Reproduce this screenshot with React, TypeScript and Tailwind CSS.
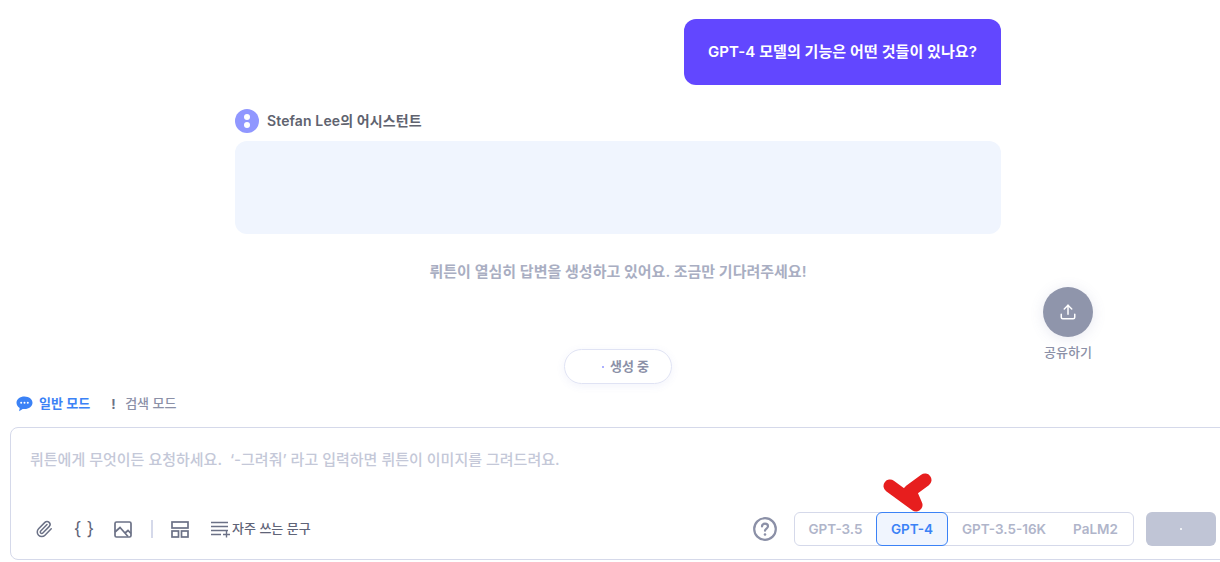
import { Paperclip, Upload } from "lucide-react";

const font = { fontFamily: '"Inter", "Noto Sans CJK KR", sans-serif' };

function ChatBubbleIcon() {
  return (
    <svg width="17" height="16" viewBox="0 0 17 16">
      <path d="M8.5 0.5C4 0.5 0.5 3.2 0.5 6.8c0 2.2 1.3 4 3.2 5.1l-0.6 3.4 3.6-2.4c0.6 0.1 1.2 0.2 1.8 0.2 4.5 0 8-2.8 8-6.3S13 0.5 8.5 0.5z" fill="#3b82f6" />
      <circle cx="5.2" cy="6.8" r="1" fill="#fff" />
      <circle cx="8.5" cy="6.8" r="1" fill="#fff" />
      <circle cx="11.8" cy="6.8" r="1" fill="#fff" />
    </svg>
  );
}

function ImageIcon() {
  return (
    <svg width="18" height="17" viewBox="0 0 18 17" fill="none" stroke="#6b7186" strokeWidth="1.7">
      <rect x="1" y="1" width="16" height="15" rx="1.5" />
      <path d="M1 11l5-4.5 8 9M11 12l3-2.5 3 3" />
    </svg>
  );
}

function LayoutIcon() {
  return (
    <svg width="18" height="17" viewBox="0 0 18 17" fill="none" stroke="#6b7186" strokeWidth="1.7">
      <rect x="1" y="1" width="16" height="6" />
      <rect x="1" y="10" width="6.5" height="6" />
      <rect x="10.5" y="10" width="6.5" height="6" />
    </svg>
  );
}

function PhraseIcon() {
  return (
    <svg width="21" height="17" viewBox="0 0 21 17" fill="none" stroke="#6b7186" strokeWidth="1.4">
      <path d="M0 1.500h17M0 5.500h17M0 9.500h17M0 13.500h10M15.500 9.500v7M12 13.500h7" />
    </svg>
  );
}

function HelpIcon() {
  return (
    <svg width="24" height="24" viewBox="0 0 24 24" fill="none">
      <circle cx="12" cy="12" r="10.800" stroke="#8b90a7" strokeWidth="2.200" />
      <path d="M9 9.500c0-1.700 1.300-2.800 3-2.800s3 1.100 3 2.600c0 2.200-3 2.300-3 4.400" stroke="#8b90a7" strokeWidth="2.200" strokeLinecap="round" />
      <circle cx="12" cy="17.500" r="1.300" fill="#8b90a7" />
    </svg>
  );
}

function ModelTabs() {
  return (
    <div className="flex h-[34px] w-[340px] items-center rounded-md border border-[#d5d9ea] text-[13.5px] font-semibold text-[#b0b5ca]">
      <div className="w-[81px] text-center">GPT-3.5</div>
      <div className="-my-px flex h-[34px] w-[72px] items-center justify-center rounded-md border border-[#3b82f6] bg-[#f0f5fe] text-[#3b82f6]">
        GPT-4
      </div>
      <div className="w-[112px] text-center">GPT-3.5-16K</div>
      <div className="flex-1 pr-[2px] text-center">PaLM2</div>
    </div>
  );
}

export default function App() {
  return (
    <div className="relative h-[562px] w-[1220px] overflow-hidden bg-white" style={font}>
      <div className="ml-[235px] flex w-[766px] flex-col pt-[19px]">
        <div className="flex justify-end">
          <div className="flex h-[66px] w-[317px] items-center justify-center rounded-t-[12px] rounded-bl-[12px] bg-[#6247ff] text-[15px] font-semibold tracking-[0.07px] text-white">
            GPT-4 모델의 기능은 어떤 것들이 있나요?
          </div>
        </div>
        <div className="mt-[24px] flex h-[24px] items-center gap-2">
          <div className="flex h-6 w-6 flex-col items-center justify-center gap-[2px] rounded-full bg-[#9097ff]">
            <div className="h-[6px] w-[6px] rounded-full bg-white" />
            <div className="h-[6px] w-[6px] rounded-full bg-white" />
          </div>
          <div className="text-sm font-semibold tracking-[0.12px] text-[#60636f]">Stefan Lee의 어시스턴트</div>
        </div>
        <div className="mt-2 h-[93px] rounded-xl bg-[#f0f5fe]" />
        <div className="mt-[28px] text-center text-[15px] leading-5 font-semibold text-[#a9aec2]">
          뤼튼이 열심히 답변을 생성하고 있어요. 조금만 기다려주세요!
        </div>
      </div>

      <div className="mt-[67px] ml-[564px] flex h-[35px] w-[108px] items-center justify-center gap-[6px] rounded-full border border-[#e0e3f4] pl-[15px] text-[13px] font-semibold text-[#8b90a7] shadow-[0_2px_8px_rgba(90,100,200,0.08)]">
        <span className="h-[2px] w-[2px] rounded-full bg-[#9097ff]" />
        생성 중
      </div>

      <div className="mt-[10px] flex h-[20px] items-center pl-4 text-[13px] font-semibold">
        <ChatBubbleIcon />
        <span className="ml-[6px] text-[#3b82f6]">일반 모드</span>
        <span className="ml-[21px] w-[4px] text-center leading-none font-bold text-[#6b7186]">!</span>
        <span className="ml-[10px] font-medium text-[#8b90a7]">검색 모드</span>
      </div>

      <div className="mt-[13px] ml-[10px] flex h-[133px] w-[1240px] flex-col rounded-lg border border-[#d5d9ea] pt-[22px] pl-[19px]">
        <div className="h-5 text-[15px] leading-5 font-medium text-[#c4c8d8]">
          뤼튼에게 무엇이든 요청하세요.&nbsp; ‘-그려줘’ 라고 입력하면 뤼튼이 이미지를 그려드려요.
        </div>
        <div className="mt-[42px] flex w-[1186px] items-center">
          <Paperclip size={18} color="#6b7186" strokeWidth={2} className="ml-[5px]" />
          <span className="ml-[20px] w-[22px] text-center text-[18px] leading-none font-normal text-[#5f6478]">{"{ }"}</span>
          <div className="ml-[19px]"><ImageIcon /></div>
          <div className="ml-[19px] h-[18px] w-[2px] bg-[#d5d9ea]" />
          <div className="ml-[18px]"><LayoutIcon /></div>
          <div className="ml-[22px]"><PhraseIcon /></div>
          <span className="text-[13px] font-medium text-[#5f6478]">자주 쓰는 문구</span>
          <div className="ml-auto"><HelpIcon /></div>
          <div className="ml-[17px]"><ModelTabs /></div>
          <div className="ml-[12px] flex h-[34px] w-[70px] items-center justify-center rounded-md bg-[#c0c5d6]">
            <span className="h-[2px] w-[2px] rounded-full bg-white" />
          </div>
        </div>
      </div>

      <div className="absolute top-[287px] left-[1043px] flex w-[50px] flex-col items-center">
        <div className="flex h-[50px] w-[50px] items-center justify-center rounded-full bg-[#8f95ab] shadow-[0_2px_14px_rgba(100,110,160,0.15)]">
          <Upload size={18} color="#fff" strokeWidth={2} />
        </div>
        <span className="mt-[6px] text-[13px] font-medium whitespace-nowrap text-[#8b90a7]">공유하기</span>
      </div>

      <svg className="absolute top-[470px] left-[880px]" width="56" height="46" viewBox="0 0 56 46" fill="none">
        <path d="M10 16L36 35L30 21L45 10" stroke="#e71e1e" strokeWidth="13" strokeLinecap="round" strokeLinejoin="round" />
      </svg>
    </div>
  );
}
